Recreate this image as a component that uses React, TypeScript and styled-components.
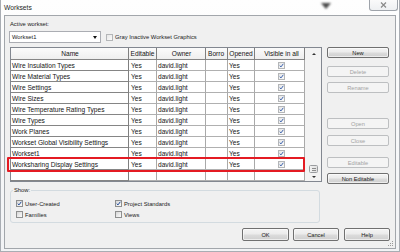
import React from "react";
import styled, { createGlobalStyle } from "styled-components";

const GlobalStyle = createGlobalStyle`
  html, body { margin: 0; padding: 0; background: #ffffff; }
  body { font-family: "Liberation Sans", Arial, sans-serif; color: #1a1a1a; }
  * { box-sizing: border-box; }
`;

const Window = styled.div`
  width: 400px;
  height: 252px;
  display: flex;
  flex-direction: column;
  padding: 0 3px 2px 3px;
  border-left: 1px solid #a9adb3;
  border-right: 1px solid #a9adb3;
  border-bottom: 1px solid #a9adb3;
  background: linear-gradient(180deg, #fefefe 0%, #f2f3f5 100%);
  overflow: hidden;
`;

const TitleBar = styled.div`
  height: 15px;
  flex: 0 0 15px;
  display: flex;
  align-items: flex-start;
  margin-right: -2px;
`;

const Title = styled.div`
  font-size: 6.7px;
  line-height: 15px;
  color: #1e1e1e;
`;

const Blob = styled.svg`
  margin-left: auto;
  margin-right: 37px;
  margin-top: 2px;
  filter: blur(0.8px);
`;

const CloseButton = styled.div`
  width: 29px;
  height: 12px;
  margin-top: -1px;
  border: 1px solid #9ea3aa;
  border-top: none;
  border-radius: 0 0 3px 3px;
  background: linear-gradient(180deg, #fbfbfb 0%, #eef0f2 100%);
  display: flex;
  align-items: center;
  justify-content: center;
`;

const Client = styled.div`
  flex: 1;
  position: relative;
  border: 1px solid #a2a6ab;
  background: #f0f0f0;
  padding: 4px 5px 0 4px;
  display: flex;
  flex-direction: column;
`;

const TopArea = styled.div`
  display: grid;
  grid-template-columns: 313px 62px;
  column-gap: 5px;
`;

const LeftCol = styled.div`
  display: flex;
  flex-direction: column;
`;

const Label = styled.div`
  font-size: 5.8px;
  line-height: 9px;
  height: 9px;
  padding-left: 1px;
`;

const DropRow = styled.div`
  margin-top: 2px;
  height: 12px;
  display: flex;
  align-items: center;
`;

const Dropdown = styled.div`
  width: 92px;
  height: 12px;
  border: 1px solid #abadb3;
  background: #ffffff;
  display: flex;
  align-items: center;
  justify-content: space-between;
  padding: 0 3px 0 2px;
  font-size: 5.8px;
`;

const Arrow = styled.span`
  width: 0;
  height: 0;
  border-left: 2.5px solid transparent;
  border-right: 2.5px solid transparent;
  border-top: 3px solid #111;
`;

const Box = styled.span<{ $soft?: boolean }>`
  flex: 0 0 7px;
  width: 7px;
  height: 7px;
  display: inline-flex;
  align-items: center;
  justify-content: center;
  border: 1px solid ${(p) => (p.$soft ? "#b4b6b8" : "#8e8f8f")};
  background: ${(p) =>
    p.$soft
      ? "linear-gradient(135deg, #e6e6e6, #fbfbfb)"
      : "linear-gradient(135deg, #d6d6d6, #fcfcfc)"};
`;

const CheckText = styled.span`
  font-size: 5.8px;
  margin-left: 2px;
  white-space: nowrap;
`;

const GrayOption = styled.div`
  display: flex;
  align-items: center;
  margin-left: 5px;
`;

const TableFrame = styled.div`
  position: relative;
  margin-top: 4px;
  margin-left: 1px;
  width: 312px;
  height: 135px;
  border: 1px solid #828790;
  background: #ffffff;
  display: flex;
`;

const GridArea = styled.div`
  width: 294px;
  display: flex;
  flex-direction: column;
`;

const Row = styled.div<{ $h: number; $head?: boolean }>`
  display: flex;
  height: ${(p) => p.$h}px;
  flex: 0 0 ${(p) => p.$h}px;
  background: ${(p) =>
    p.$head ? "linear-gradient(180deg, #fbfbfb 0%, #ededed 100%)" : "#ffffff"};
`;

const Cell = styled.div<{ $w: number; $name?: boolean; $align?: string; $head?: boolean; $pl?: number }>`
  flex: 0 0 ${(p) => p.$w}px;
  width: ${(p) => p.$w}px;
  height: 100%;
  border-right: 1px solid ${(p) => (p.$name || p.$head ? "#7f7f7f" : "#a9a9a9")};
  border-bottom: 1px solid ${(p) => (p.$name || p.$head ? "#858585" : "#b0b0b0")};
  padding-left: ${(p) => (p.$pl !== undefined ? p.$pl : 1)}px;
  display: flex;
  align-items: ${(p) => (p.$head ? "flex-start" : "center")};
  padding-top: ${(p) => (p.$head ? 1 : 0)}px;
  justify-content: ${(p) => p.$align || "flex-start"};
  overflow: hidden;
  white-space: nowrap;
  font-size: 6.6px;
  line-height: 9px;
  color: #141414;
`;

const Scrollbar = styled.div`
  width: 16px;
  display: flex;
  flex-direction: column;
  background: #f3f3f3;
`;

const ScrollBtn = styled.div<{ $h: number }>`
  height: ${(p) => p.$h}px;
  flex: 0 0 ${(p) => p.$h}px;
  display: flex;
  align-items: center;
  justify-content: center;
`;

const ScrollArrow = styled.span<{ $up?: boolean }>`
  width: 0;
  height: 0;
  margin-left: 1px;
  border-left: 2px solid transparent;
  border-right: 2px solid transparent;
  ${(p) => (p.$up ? "border-bottom: 2px solid #333;" : "border-top: 2px solid #333;")}
`;

const Track = styled.div`
  flex: 1;
  display: flex;
  flex-direction: column;
  justify-content: flex-end;
  align-items: center;
`;

const Thumb = styled.div`
  width: 9px;
  height: 8px;
  margin-left: 1px;
  border: 1px solid #9a9c9f;
  border-radius: 1.5px;
  background: linear-gradient(90deg, #f3f3f3, #e0e0e0);
  display: flex;
  flex-direction: column;
  justify-content: center;
  align-items: center;
  gap: 1px;
`;

const Grip = styled.span`
  width: 4px;
  height: 1px;
  background: #8c8c8c;
`;

const Highlight = styled.div`
  position: absolute;
  left: -4px;
  top: 109px;
  width: 298px;
  height: 15px;
  border: 2px solid #e41b23;
  border-radius: 1px;
  pointer-events: none;
`;

const ShowGroup = styled.fieldset`
  margin: 4px 0 0 1px;
  width: 310px;
  height: 37px;
  border: 1px solid #d3dbe0;
  border-radius: 3px;
  padding: 3px 5px 2px 5px;
  min-inline-size: 0;
`;

const Legend = styled.legend`
  font-size: 5.8px;
  line-height: 9px;
  padding: 0 1px;
  margin-left: -3px;
  color: #1a1a1a;
`;

const OptionGrid = styled.div`
  display: grid;
  grid-template-columns: 99px 1fr;
  grid-auto-rows: 11px;
`;

const Option = styled.div`
  display: flex;
  align-items: center;
`;

const RightCol = styled.div`
  display: flex;
  flex-direction: column;
`;

const Button = styled.button<{ $w: number; $h: number; $mt?: number; $ml?: number }>`
  width: ${(p) => p.$w}px;
  height: ${(p) => p.$h}px;
  margin-top: ${(p) => p.$mt || 0}px;
  margin-left: ${(p) => p.$ml || 0}px;
  padding: 0;
  font-family: "Liberation Sans", Arial, sans-serif;
  font-size: 5.7px;
  border-radius: 2px;
  border: 1px solid #707070;
  color: #1a1a1a;
  background: linear-gradient(180deg, #f4f4f4 0%, #ebebeb 48%, #dcdcdc 52%, #cfcfcf 100%);
  box-shadow: inset 0 0 0 1px rgba(255, 255, 255, 0.6);
  &:disabled {
    border-color: #bdbfc1;
    color: #a3a3a3;
    background: #f4f4f4;
    box-shadow: none;
  }
`;

const BottomRow = styled.div`
  margin-top: 5px;
  display: flex;
  justify-content: flex-end;
  gap: 4px;
`;

const ResizeGrip = styled.svg`
  position: absolute;
  right: 1px;
  bottom: 1px;
`;

const Check = ({ soft }: { soft?: boolean }) => (
  <svg width="5" height="5" viewBox="0 0 5 5">
    <path
      d="M0.7 2.6 L2 3.9 L4.3 0.8"
      fill="none"
      stroke={soft ? "#3d63ad" : "#1f4a9a"}
      strokeWidth="1"
    />
  </svg>
);

const CheckBox = ({ checked, soft }: { checked?: boolean; soft?: boolean }) => (
  <Box $soft={soft}>{checked && <Check soft={soft} />}</Box>
);

const COLS = [118, 28, 49, 22, 27, 50];

const NAMES = [
  "Wire Insulation Types",
  "Wire Material Types",
  "Wire Settings",
  "Wire Sizes",
  "Wire Temperature Rating Types",
  "Wire Types",
  "Work Planes",
  "Workset Global Visibility Settings",
  "Workset1",
  "Worksharing Display Settings",
];

export default function App() {
  return (
    <>
      <GlobalStyle />
      <Window>
        <TitleBar>
          <Title>Worksets</Title>
          <Blob width="12" height="8" viewBox="0 0 12 8">
            <path d="M1 1 L11 1 L6 7 Z" fill="#2a2a2a" opacity="0.85" />
          </Blob>
          <CloseButton>
            <svg width="7" height="6" viewBox="0 0 7 6">
              <path d="M1 0.5 L6 5.5 M6 0.5 L1 5.5" stroke="#8a8a8a" strokeWidth="1.2" />
            </svg>
          </CloseButton>
        </TitleBar>
        <Client>
          <TopArea>
            <LeftCol>
              <Label>Active workset:</Label>
              <DropRow>
                <Dropdown>
                  <span>Workset1</span>
                  <Arrow />
                </Dropdown>
                <GrayOption>
                  <CheckBox soft />
                  <CheckText>Gray Inactive Workset Graphics</CheckText>
                </GrayOption>
              </DropRow>
              <TableFrame>
                <GridArea>
                  <Row $h={12} $head>
                    <Cell $w={COLS[0]} $head $align="center">Name</Cell>
                    <Cell $w={COLS[1]} $head $align="center" $pl={0}>Editable</Cell>
                    <Cell $w={COLS[2]} $head $align="center">Owner</Cell>
                    <Cell $w={COLS[3]} $head $pl={2}>Borro</Cell>
                    <Cell $w={COLS[4]} $head $align="center" $pl={0}>Opened</Cell>
                    <Cell $w={COLS[5]} $head $align="center" $pl={4}>Visible in all</Cell>
                  </Row>
                  {NAMES.map((n) => (
                    <Row key={n} $h={11}>
                      <Cell $w={COLS[0]} $name>{n}</Cell>
                      <Cell $w={COLS[1]} $pl={2}>Yes</Cell>
                      <Cell $w={COLS[2]}>david.light</Cell>
                      <Cell $w={COLS[3]} />
                      <Cell $w={COLS[4]}>Yes</Cell>
                      <Cell $w={COLS[5]} $align="center" $pl={4}>
                        <CheckBox checked soft />
                      </Cell>
                    </Row>
                  ))}
                  <Row $h={11}>
                    <Cell $w={COLS[0]} $name />
                    <Cell $w={COLS[1]} />
                    <Cell $w={COLS[2]} />
                    <Cell $w={COLS[3]} />
                    <Cell $w={COLS[4]} />
                    <Cell $w={COLS[5]} />
                  </Row>
                </GridArea>
                <Scrollbar>
                  <ScrollBtn $h={11}>
                    <ScrollArrow $up />
                  </ScrollBtn>
                  <Track>
                    <Thumb>
                      <Grip />
                      <Grip />
                    </Thumb>
                  </Track>
                  <ScrollBtn $h={8}>
                    <ScrollArrow />
                  </ScrollBtn>
                </Scrollbar>
                <Highlight />
              </TableFrame>
              <ShowGroup>
                <Legend>Show:</Legend>
                <OptionGrid>
                  <Option>
                    <CheckBox checked />
                    <CheckText>User-Created</CheckText>
                  </Option>
                  <Option>
                    <CheckBox checked />
                    <CheckText>Project Standards</CheckText>
                  </Option>
                  <Option>
                    <CheckBox />
                    <CheckText>Families</CheckText>
                  </Option>
                  <Option>
                    <CheckBox />
                    <CheckText>Views</CheckText>
                  </Option>
                </OptionGrid>
              </ShowGroup>
            </LeftCol>
            <RightCol>
              <Button $w={62} $h={11} $mt={27}>New</Button>
              <Button $w={62} $h={11} $mt={8} disabled>Delete</Button>
              <Button $w={62} $h={11} $mt={5} disabled>Rename</Button>
              <Button $w={62} $h={11} $mt={25} disabled>Open</Button>
              <Button $w={62} $h={11} $mt={6} disabled>Close</Button>
              <Button $w={62} $h={11} $mt={11} disabled>Editable</Button>
              <Button $w={62} $h={11} $mt={5}>Non Editable</Button>
            </RightCol>
          </TopArea>
          <BottomRow>
            <Button $w={47} $h={13}>OK</Button>
            <Button $w={46} $h={13}>Cancel</Button>
            <Button $w={46} $h={13} $ml={1}>Help</Button>
          </BottomRow>
          <ResizeGrip width="6" height="6" viewBox="0 0 6 6">
            <rect x="4" y="0" width="1" height="1" fill="#9a9a9a" />
            <rect x="2" y="2" width="1" height="1" fill="#9a9a9a" />
            <rect x="4" y="2" width="1" height="1" fill="#9a9a9a" />
            <rect x="0" y="4" width="1" height="1" fill="#9a9a9a" />
            <rect x="2" y="4" width="1" height="1" fill="#9a9a9a" />
            <rect x="4" y="4" width="1" height="1" fill="#9a9a9a" />
          </ResizeGrip>
        </Client>
      </Window>
    </>
  );
}
